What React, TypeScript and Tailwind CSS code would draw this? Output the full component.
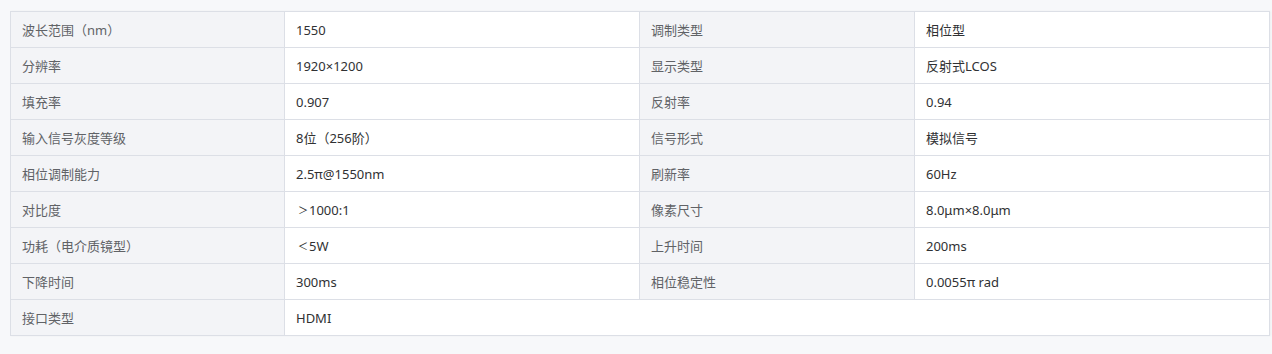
const rows: [string, string, string?, string?][] = [
  ["波长范围（nm）", "1550", "调制类型", "相位型"],
  ["分辨率", "1920×1200", "显示类型", "反射式LCOS"],
  ["填充率", "0.907", "反射率", "0.94"],
  ["输入信号灰度等级", "8位（256阶）", "信号形式", "模拟信号"],
  ["相位调制能力", "2.5π@1550nm", "刷新率", "60Hz"],
  ["对比度", "＞1000:1", "像素尺寸", "8.0μm×8.0μm"],
  ["功耗（电介质镜型）", "＜5W", "上升时间", "200ms"],
  ["下降时间", "300ms", "相位稳定性", "0.0055π rad"],
  ["接口类型", "HDMI"],
];

const labelCls =
  "h-9 border border-[#dcdfe6] bg-[#f3f4f7] px-[11px] text-left align-middle font-normal text-[#606266]";
const valueCls =
  "h-9 border border-[#dcdfe6] bg-white px-[11px] text-left align-middle text-[#303133]";

// fullwidth comparison signs are drawn small in the reference
function Value({ text }: { text: string }) {
  const sign = text[0];
  if (sign === "＞" || sign === "＜") {
    return (
      <>
        <span className="relative -top-px inline-block pl-[2px] pr-px text-[10px] leading-none">{sign}</span>
        {text.slice(1)}
      </>
    );
  }
  return <>{text}</>;
}

export default function App() {
  return (
    <div
      className="min-h-[354px] w-full bg-[#f7f8fa] pl-[10px] pr-[3px] pt-[11px]"
      style={{ fontFamily: '"Noto Sans", "Noto Sans CJK SC", sans-serif' }}
    >
      <table className="w-[1259px] table-fixed border-collapse text-[13px] leading-5 shadow-[1px_0_2px_rgba(0,0,0,0.04)]">
        <colgroup>
          <col className="w-[274px]" />
          <col className="w-[355px]" />
          <col className="w-[275px]" />
          <col className="w-[355px]" />
        </colgroup>
        <tbody>
          {rows.map(([l1, v1, l2, v2]) => (
            <tr key={l1}>
              <th className={labelCls}>{l1}</th>
              {l2 ? (
                <>
                  <td className={valueCls}>
                    <Value text={v1} />
                  </td>
                  <th className={labelCls}>{l2}</th>
                  <td className={valueCls}>{v2}</td>
                </>
              ) : (
                <td className={valueCls} colSpan={3}>
                  {v1}
                </td>
              )}
            </tr>
          ))}
        </tbody>
      </table>
    </div>
  );
}
